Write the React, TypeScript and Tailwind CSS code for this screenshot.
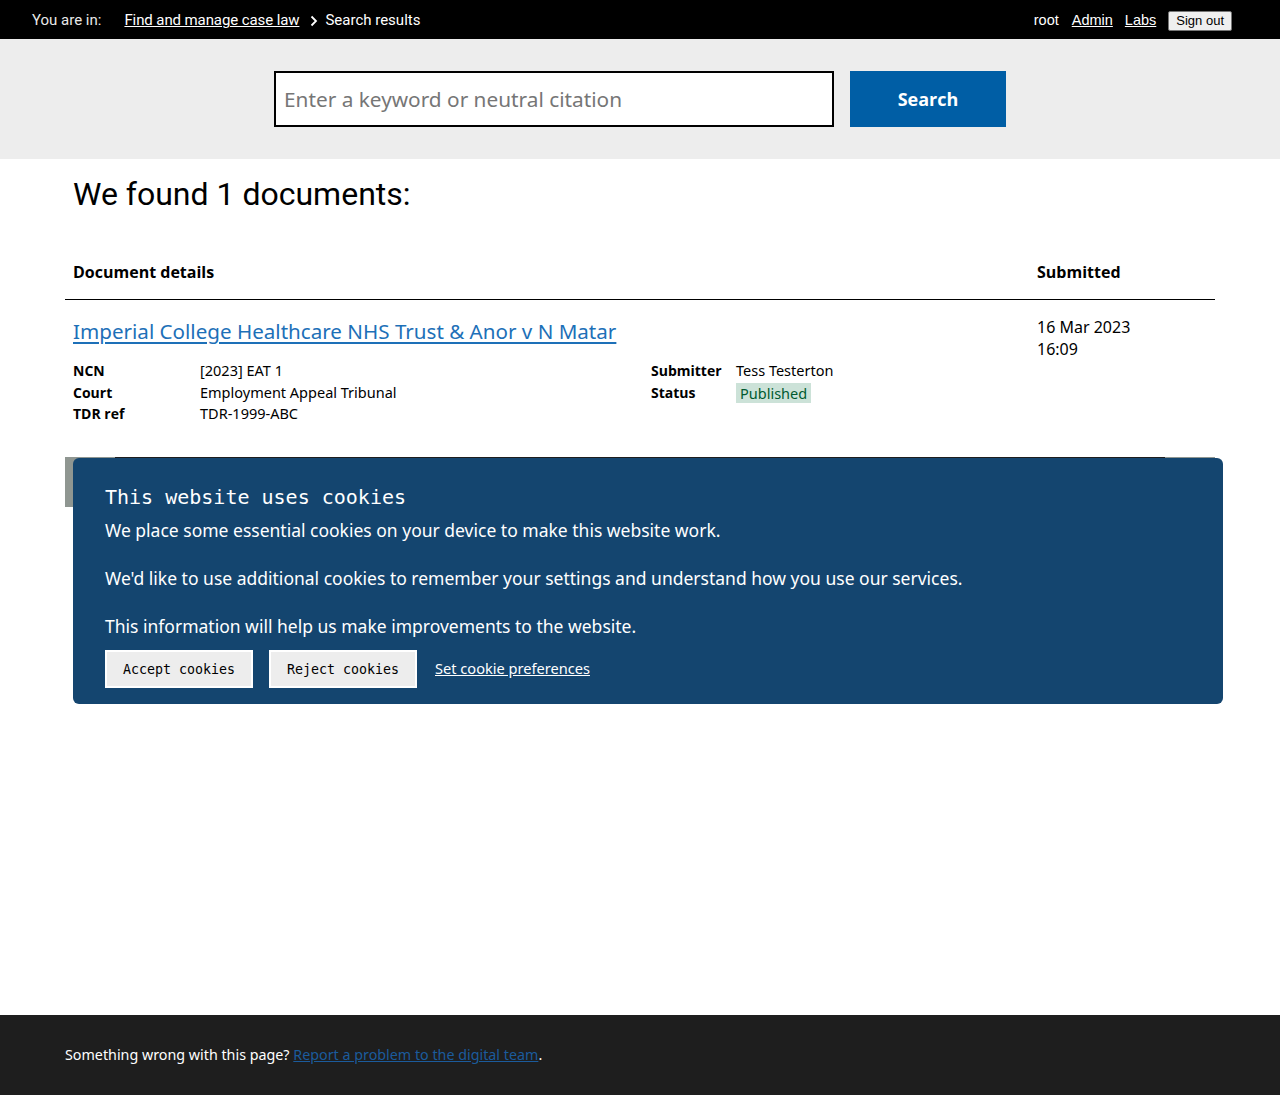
import React from "react";

export default function App() {
  const open = { fontFamily: '"Noto Sans", "Open Sans", sans-serif' };
  const openBold = { fontFamily: '"Open Sans", "Noto Sans", sans-serif' };
  const roboto = { fontFamily: 'Roboto, "Open Sans", sans-serif' };
  const arial = { fontFamily: '"Liberation Sans", Arial, sans-serif' };
  const mono = { fontFamily: '"DejaVu Sans Mono", "Liberation Mono", monospace' };
  return (
    <div className="relative min-h-screen flex flex-col bg-white text-black" style={open}>
      {/* top bar */}
      <div className="h-[39px] bg-black flex items-center justify-between pl-[32px] pr-[48px] pt-[2px]">
        <div className="flex items-center text-[15px] text-[#e8e8e8]" style={roboto}>
          <span>You are in:</span>
          <a href="#" className="ml-[23px] underline text-white tracking-[-0.1px]">Find and manage case law</a>
          <svg className="ml-[11px] mr-[7px]" width="8" height="12" viewBox="0 0 8 12">
            <path d="M1.5 1.5 L6 6 L1.5 10.5" fill="none" stroke="white" strokeWidth="1.8" />
          </svg>
          <span className="text-white">Search results</span>
        </div>
        <div className="flex items-center text-[14.5px] text-white" style={arial}>
          <span>root</span>
          <a href="#" className="ml-[13px] underline">Admin</a>
          <a href="#" className="ml-[12px] underline">Labs</a>
          <button className="ml-[12px] h-[20px] px-[7px] text-[13px] text-black bg-[#efefef] border border-[#767676] rounded-[2px] leading-none">Sign out</button>
        </div>
      </div>

      {/* search band */}
      <div className="bg-[#ededed] pt-[32px] pb-[32px] flex justify-center">
        <div className="flex gap-[16px]">
          <input
            placeholder="Enter a keyword or neutral citation"
            className="w-[560px] h-[56px] border-2 border-black bg-white px-[8px] text-[20.8px] placeholder:text-[#767676] outline-none"
            style={open}
          />
          <button className="w-[156px] h-[56px] bg-[#005ea5] text-white font-bold text-[18px]" style={openBold}>Search</button>
        </div>
      </div>

      {/* main */}
      <main className="flex-1 px-[65px]">
        <h1 className="mt-[15px] pl-[8px] text-[32px] leading-[40px]" style={roboto}>We found 1 documents:</h1>
        <table className="mt-[29px] w-full border-collapse">
          <thead>
            <tr className="border-b border-black">
              <th className="text-left px-[8px] pt-[17px] pb-[15px] text-[16px] leading-[24px] font-bold" style={openBold}>Document details</th>
              <th className="text-left w-[186px] px-[8px] pt-[17px] pb-[15px] text-[16px] leading-[24px] font-bold" style={openBold}>Submitted</th>
            </tr>
          </thead>
          <tbody>
            <tr>
              <td className="align-top px-[8px] pt-[16px] pb-[16px]">
                <a href="#" className="text-[20.6px] leading-[30px] text-[#1d70b8] underline underline-offset-[3px]">Imperial College Healthcare NHS Trust &amp; Anor v N Matar</a>
                <div className="mt-[14px] flex text-[14.5px] leading-[21.5px]">
                  <div className="w-[578px]">
                    <div className="flex"><span className="w-[127px] font-bold text-[14px]" style={openBold}>NCN</span><span>[2023] EAT 1</span></div>
                    <div className="flex"><span className="w-[127px] font-bold text-[14px]" style={openBold}>Court</span><span>Employment Appeal Tribunal</span></div>
                    <div className="flex"><span className="w-[127px] font-bold text-[14px]" style={openBold}>TDR ref</span><span>TDR-1999-ABC</span></div>
                  </div>
                  <div>
                    <div className="flex"><span className="w-[85px] font-bold text-[14px]" style={openBold}>Submitter</span><span>Tess Testerton</span></div>
                    <div className="flex items-center"><span className="w-[85px] font-bold text-[14px]" style={openBold}>Status</span><span className="bg-[#cce2d8] text-[#005a30] px-[4px] leading-[20px] mt-[1px]">Published</span></div>
                  </div>
                </div>
              </td>
              <td className="align-top px-[8px] pt-[16px] pb-[16px] text-[16px] leading-[22px]">
                <div>16 Mar 2023</div>
                <div>16:09</div>
              </td>
            </tr>
          </tbody>
        </table>
        <div className="mt-[16px] flex">
          <div className="w-[50px] h-[50px] bg-[#8f9691]"></div>
          <div className="flex-1 border-t border-[#1e1e1e]"></div>
          <div className="w-[50px] h-[50px] bg-[#8f9691]"></div>
        </div>
      </main>

      {/* footer */}
      <footer className="h-[80px] bg-[#1e1e1e] flex items-center px-[65px] text-[14.3px] text-white">
        <span>Something wrong with this page? <a href="#" className="text-[#1b5b9c] underline">Report a problem to the digital team</a>.</span>
      </footer>

      {/* cookie banner */}
      <div className="absolute top-[458px] left-[73px] w-[1150px] bg-[#14456f] rounded-[6px] pl-[32px] pr-[32px] pt-[25px] pb-[16px] text-white">
        <h2 className="text-[20px] leading-[28px]" style={mono}>This website uses cookies</h2>
        <p className="mt-[7px] text-[17.5px] leading-[24px] mb-[24px]">We place some essential cookies on your device to make this website work.</p>
        <p className="text-[17.5px] leading-[24px] mb-[24px]">We'd like to use additional cookies to remember your settings and understand how you use our services.</p>
        <p className="text-[17.5px] leading-[24px]">This information will help us make improvements to the website.</p>
        <div className="mt-[12px] flex items-center">
          <button className="w-[148px] h-[38px] bg-[#ededed] border-2 border-white text-black text-[13.3px] pt-[2px]" style={mono}>Accept cookies</button>
          <button className="ml-[16px] w-[148px] h-[38px] bg-[#ededed] border-2 border-white text-black text-[13.3px] pt-[2px]" style={mono}>Reject cookies</button>
          <a href="#" className="ml-[18px] text-[14.6px] underline text-white">Set cookie preferences</a>
        </div>
      </div>
    </div>
  );
}
